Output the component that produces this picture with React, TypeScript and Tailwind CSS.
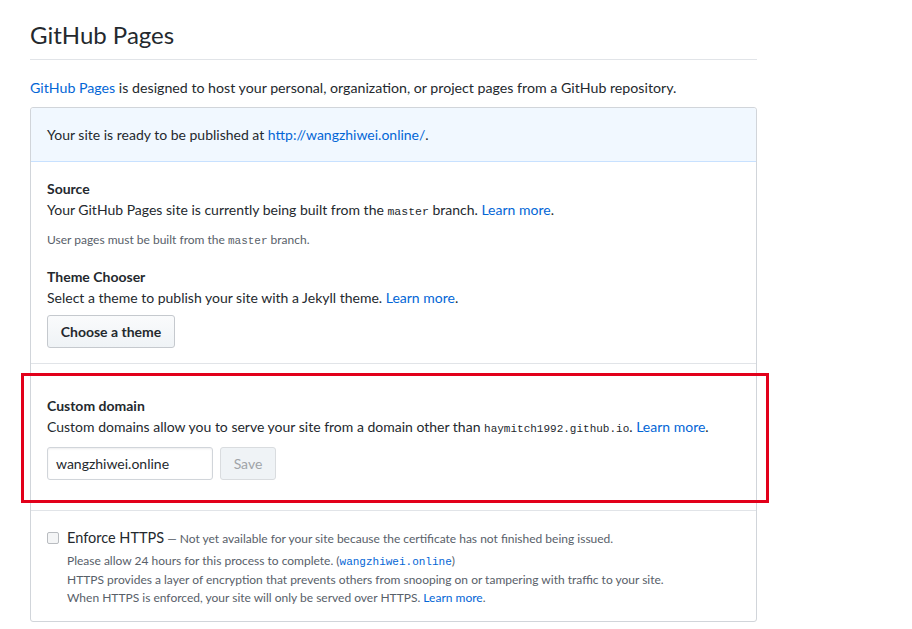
import React from "react";

const mono = "font-['Liberation_Mono',monospace]";

export default function App() {
  return (
    <div className="relative min-h-[629px] w-[912px] bg-white font-['Lato','Noto_Sans',sans-serif] text-[14px] text-[#24292e]">
      <div className="ml-[30px] w-[727px] pt-[20px]">
        <h2 className="border-b border-[#e1e4e8] pb-[9px] text-[24px] font-normal leading-[30px]">
          GitHub Pages
        </h2>
        <p className="mt-[17px] mb-[9px] text-[14.2px] leading-[21px]">
          <span className="text-[#0366d6]">GitHub Pages</span> is designed to host your personal, organization, or project pages from a GitHub repository.
        </p>
        <div className="rounded-[3px] border border-[#d1d5da]">
          <div className="rounded-t-[3px] border-b border-[#c8e1ff] bg-[#f1f8ff] px-[16px] py-[16px] leading-[21px]">
            Your site is ready to be published at <span className="text-[#0366d6]">http://wangzhiwei.online/</span>.
          </div>

          <div className="border-b border-[#e1e4e8] px-[16px] pt-[16px] pb-[15px]">
            <div className="font-bold leading-[21px]">Source</div>
            <div className="leading-[21px]">
              Your GitHub Pages site is currently being built from the <span className={`${mono} text-[11.5px] leading-[0]`}>master</span> branch. <span className="text-[#0366d6]">Learn more</span>.
            </div>
            <div className="mt-[11px] text-[12px] leading-[18px] text-[#586069]">
              User pages must be built from the <span className={`${mono} text-[11px] leading-[0]`}>master</span> branch.
            </div>
            <div className="mt-[17px] font-bold leading-[21px]">Theme Chooser</div>
            <div className="leading-[21px]">
              Select a theme to publish your site with a Jekyll theme. <span className="text-[#0366d6]">Learn more</span>.
            </div>
            <button className="mt-[7px] h-[33px] w-[128px] rounded-[3px] border border-[#c5c9ce] bg-gradient-to-b from-[#fafbfc] to-[#eff3f6] text-[14px] font-bold leading-[20px] text-[#24292e]">
              Choose a theme
            </button>
          </div>

          <div className="border-b border-[#e1e4e8] px-[16px] pt-[31px] pb-[30px]">
            <div className="font-bold leading-[21px]">Custom domain</div>
            <div className="leading-[21px]">
              Custom domains allow you to serve your site from a domain other than <span className={`${mono} text-[11px] leading-[0]`}>haymitch1992.github.io</span>. <span className="text-[#0366d6]">Learn more</span>.
            </div>
            <div className="mt-[10px] flex gap-[7px]">
              <div className="flex h-[33px] w-[166px] items-center rounded-[3px] border border-[#d1d5da] px-[8px] text-[14px] text-[#24292e] shadow-[inset_0_1px_2px_rgba(27,31,35,0.075)]">
                wangzhiwei.online
              </div>
              <div className="flex h-[33px] w-[56px] items-center justify-center rounded-[3px] border border-[#d9dcdf] bg-[#eff3f6] text-[14px] text-[#a0a4a8]">
                Save
              </div>
            </div>
          </div>

          <div className="flex gap-[8px] px-[16px] pt-[20px] pb-[13px]">
            <div className="mt-[1px] h-[12px] w-[12px] shrink-0 rounded-[2px] border border-[#b9bcc0] bg-[#f4f5f6]" />
            <div className="-mt-[3px]">
              <div className="leading-[19px]">
                <span className="text-[14.5px] text-[#24292e]">Enforce HTTPS</span>
                <span className="text-[12px] text-[#586069]"> — Not yet available for your site because the certificate has not finished being issued.</span>
              </div>
              <div className="mt-[4px] text-[12px] leading-[18.5px] text-[#586069]">
                <div>
                  Please allow 24 hours for this process to complete. (<span className={`${mono} text-[11px] leading-[0] text-[#0366d6]`}>wangzhiwei.online</span>)
                </div>
                <div>HTTPS provides a layer of encryption that prevents others from snooping on or tampering with traffic to your site.</div>
                <div>
                  When HTTPS is enforced, your site will only be served over HTTPS. <span className="text-[#0366d6]">Learn more</span>.
                </div>
              </div>
            </div>
          </div>
        </div>
      </div>

      <div className="pointer-events-none absolute left-[21px] top-[373px] h-[130px] w-[748px] border-[3px] border-[#e2001a]" />
    </div>
  );
}
